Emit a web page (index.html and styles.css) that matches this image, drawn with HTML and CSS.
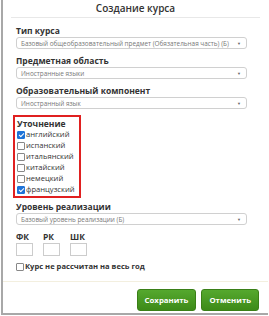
FILE: index.html
```html
<!DOCTYPE html>
<html lang="ru">
<head>
  <meta charset="UTF-8" />
  <title>Создание курса</title>
  <link rel="stylesheet" href="styles.css">
</head>
<body>
<div class="dialog">
  <div class="dialog-header">Создание курса</div>
  <div class="dialog-body">
    <div class="field">
      <div class="label">Тип курса</div>
      <div class="select"><span>Базовый общеобразовательный предмет (Обязательная часть) (Б)</span><span class="arrow">▼</span></div>
    </div>
    <div class="field">
      <div class="label">Предметная область</div>
      <div class="select"><span>Иностранные языки</span><span class="arrow">▼</span></div>
    </div>
    <div class="field">
      <div class="label">Образовательный компонент</div>
      <div class="select"><span>Иностранный язык</span><span class="arrow">▼</span></div>
    </div>
    <div class="refine">
      <div class="label">Уточнение</div>
      <label class="check"><span class="box checked"></span>английский</label>
      <label class="check"><span class="box"></span>испанский</label>
      <label class="check"><span class="box"></span>итальянский</label>
      <label class="check"><span class="box"></span>китайский</label>
      <label class="check"><span class="box"></span>немецкий</label>
      <label class="check"><span class="box checked"></span>французский</label>
    </div>
    <div class="field">
      <div class="label">Уровень реализации</div>
      <div class="select"><span>Базовый уровень реализации (Б)</span><span class="arrow">▼</span></div>
    </div>
    <div class="parts">
      <div class="part"><div class="label">ФК</div><div class="small-input"></div></div>
      <div class="part"><div class="label">РК</div><div class="small-input"></div></div>
      <div class="part"><div class="label">ШК</div><div class="small-input"></div></div>
    </div>
    <label class="check bold"><span class="box"></span>Курс не рассчитан на весь год</label>
  </div>
  <div class="dialog-footer">
    <button class="btn">Сохранить</button>
    <button class="btn">Отменить</button>
  </div>
</div>
</body>
</html>
```

FILE: styles.css
```css
body {
  margin: 0;
  font-family: "Open Sans", sans-serif;
  background: #fff;
}
.dialog {
  width: 267px;
  height: 315px;
  border-left: 2px solid #a8a8a8;
  border-bottom: 2px solid #a8a8a8;
  margin-left: 1px;
  box-sizing: border-box;
  display: flex;
  flex-direction: column;
  background: #fff;
}
.dialog-header {
  margin: 0 8px;
  height: 17px;
  border-bottom: 1px solid #e8e8e8;
  text-align: center;
  font-size: 10px;
  font-weight: 600;
  color: #333;
  line-height: 16px;
}
.dialog-body {
  padding: 7px 0 0 13px;
  flex: 1;
}
.label {
  font-size: 8.5px;
  font-weight: 700;
  color: #333;
  line-height: 11px;
}
.field {
  margin-bottom: 6px;
}
.select {
  width: 231px;
  height: 12px;
  border: 1px solid #d0d0d0;
  border-radius: 3px;
  box-sizing: border-box;
  display: flex;
  justify-content: space-between;
  align-items: center;
  padding: 0 5px 0 4px;
  font-size: 6.4px;
  color: #777;
  margin-top: 1px;
}
.arrow {
  font-size: 4px;
  color: #666;
}
.refine {
  width: 68px;
  border: 2px solid #e02020;
  box-sizing: border-box;
  padding: 1px 0 1px 2px;
  margin: 0 0 3px -3px;
}
.check {
  display: flex;
  align-items: center;
  font-size: 7.6px;
  color: #333;
  line-height: 11px;
}
.check.bold {
  font-weight: 700;
  margin-top: 5px;
}
.box {
  width: 6px;
  height: 6px;
  border: 1px solid #888;
  border-radius: 1px;
  background: #fff;
  margin-right: 1px;
  position: relative;
}
.box.checked {
  background: #1e73d8;
  border-color: #1e73d8;
}
.box.checked::after {
  content: "";
  position: absolute;
  left: 2px;
  top: 0;
  width: 2px;
  height: 4px;
  border: solid #fff;
  border-width: 0 1px 1px 0;
  transform: rotate(45deg);
}
.parts {
  display: flex;
  gap: 10px;
}
.small-input {
  width: 17px;
  height: 13px;
  border: 1px solid #ccc;
  box-sizing: border-box;
  margin-top: 1px;
}
.dialog-footer {
  border-top: 1px solid #f3efdf;
  display: flex;
  justify-content: flex-end;
  gap: 5px;
  padding: 7px 9px 2px 0;
}
.btn {
  font-family: "Open Sans", sans-serif;
  font-size: 7.8px;
  font-weight: 700;
  color: #fff;
  background: linear-gradient(#55a82e, #3d8a18);
  border: 1px solid #3a7f17;
  border-radius: 3px;
  height: 22px;
  padding: 0 7px;
}
```
